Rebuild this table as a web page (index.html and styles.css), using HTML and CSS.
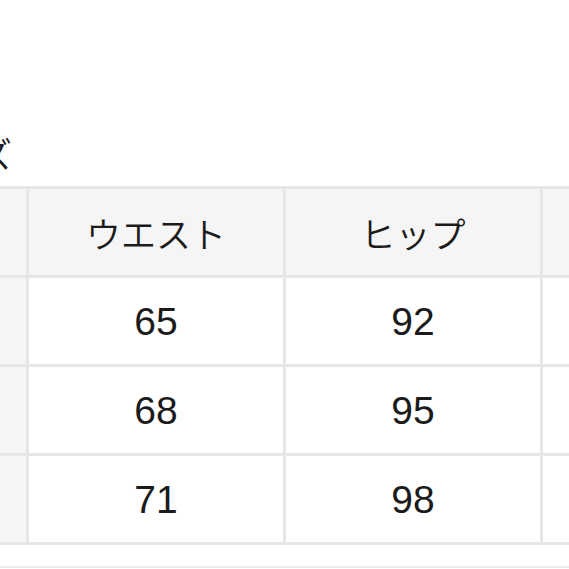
FILE: index.html
```html
<!DOCTYPE html>
<html lang="ja">
<head>
<meta charset="utf-8">
<title>サイズ</title>
<link rel="stylesheet" href="styles.css">
</head>
<body>
<div class="page">
  <h2 class="title">サイズ</h2>
  <table class="size-table">
    <thead>
      <tr>
        <th class="label">サイズ</th>
        <th>ウエスト</th>
        <th>ヒップ</th>
        <th>股下</th>
      </tr>
    </thead>
    <tbody>
      <tr><th class="label">S</th><td class="num">65</td><td class="num">92</td><td class="num">70</td></tr>
      <tr><th class="label">M</th><td class="num">68</td><td class="num">95</td><td class="num">72</td></tr>
      <tr><th class="label">L</th><td class="num">71</td><td class="num">98</td><td class="num">74</td></tr>
    </tbody>
  </table>
  <div class="divider"></div>
</div>
</body>
</html>
```

FILE: styles.css
```css
html, body {
  margin: 0;
  padding: 0;
  background: #ffffff;
  overflow: hidden;
}
.page {
  width: 569px;
  height: 569px;
  overflow: hidden;
  font-family: "Noto Sans CJK JP", "Noto Sans", sans-serif;
  color: #1b1b1b;
}
.title {
  margin: 0 0 0 -92px;
  padding-top: 129px;
  box-sizing: border-box;
  height: 186px;
  font-size: 35px;
  font-weight: 350;
  line-height: 48px;
  white-space: nowrap;
}
.size-table {
  margin-left: -231px;
  border-collapse: collapse;
  table-layout: fixed;
  width: 1031px;
}
.size-table th,
.size-table td {
  border: 3px solid #e6e6e6;
  width: 254px;
  height: 86px;
  padding: 0;
  text-align: center;
  vertical-align: middle;
  font-weight: 350;
  font-size: 35px;
  line-height: 1;
}
.size-table thead th,
.size-table .label {
  background: #f5f5f5;
}
.size-table .num {
  font-family: "Liberation Sans", "Noto Sans CJK JP", sans-serif;
  font-weight: 400;
  font-size: 39px;
  background: #ffffff;
}
.divider {
  margin-top: 21px;
  height: 2px;
  background: #ececec;
}
```
